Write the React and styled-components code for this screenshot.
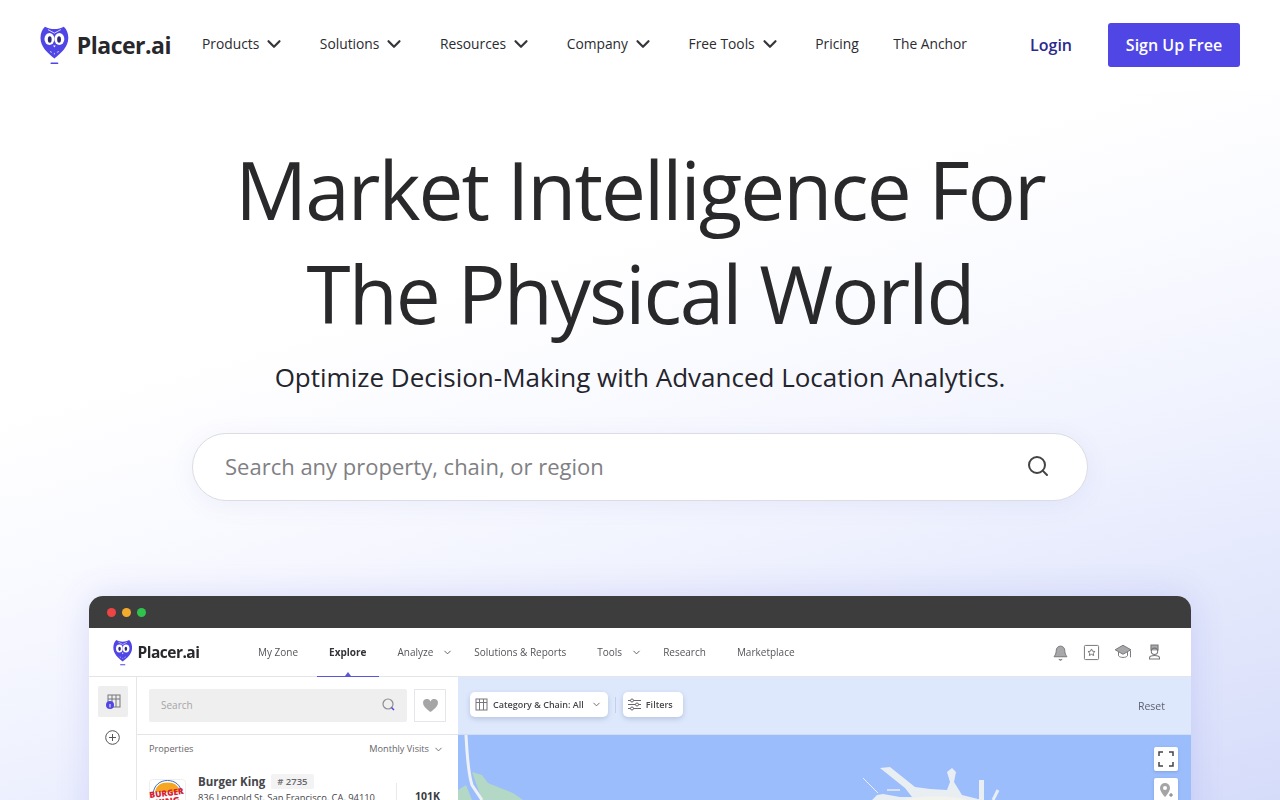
import React from "react";
import styled, { createGlobalStyle } from "styled-components";
import { ChevronDown, Search } from "lucide-react";

const GlobalStyle = createGlobalStyle`
  html, body {
    margin: 0;
    padding: 0;
    height: 800px;
    overflow: hidden;
    background: #fff;
    font-family: "Open Sans", "Liberation Sans", sans-serif;
  }
`;

const Page = styled.div`
  width: 1280px;
  height: 800px;
  overflow: hidden;
  background: linear-gradient(164deg, #ffffff 35%, #f9faff 50%, #f0f2fe 65%, #e8ecfd 74%, #dde2fb 91%, #d5dcfa 100%);
`;

const Header = styled.header`
  height: 90px;
  padding: 0 40px;
  display: flex;
  align-items: center;
  background: #fff;
  box-sizing: border-box;
`;

const Logo = styled.div`
  display: flex;
  align-items: center;
  gap: ${(p) => (p.$small ? "5px" : "8px")};
  font-weight: 700;
  font-size: ${(p) => (p.$small ? "15.5px" : "23px")};
  letter-spacing: -0.5px;
  color: #28282c;
  width: ${(p) => (p.$small ? "auto" : "162px")};
`;

const Nav = styled.nav`
  display: flex;
  align-items: center;
  gap: 34.6px;
  flex: 1;
  margin-bottom: 3px;
`;

const NavItem = styled.a`
  display: flex;
  align-items: center;
  gap: 4px;
  font-size: 13.8px;
  color: #2b2b30;
`;

const Login = styled.a`
  font-size: 16px;
  font-weight: 600;
  color: #2b2a8c;
  margin-right: 36px;
`;

const SignUp = styled.a`
  width: 132px;
  height: 44px;
  display: flex;
  align-items: center;
  justify-content: center;
  background: #4f46e5;
  color: #fff;
  font-size: 16px;
  font-weight: 600;
  border-radius: 3px;
`;

const Hero = styled.section`
  display: flex;
  flex-direction: column;
  align-items: center;
`;

const Title = styled.h1`
  margin: 47px 0 0;
  font-size: 80px;
  line-height: 104px;
  font-weight: 400;
  letter-spacing: -1.95px;
  text-align: center;
  color: #29292b;
`;

const Subtitle = styled.p`
  margin: 12px 0 0;
  font-size: 26px;
  line-height: 40px;
  color: #24242c;
`;

const SearchBox = styled.div`
  margin-top: 36px;
  width: 896px;
  height: 68px;
  box-sizing: border-box;
  padding: 0 37px 3px 32px;
  display: flex;
  align-items: center;
  justify-content: space-between;
  background: #fff;
  border: 1px solid #dcdde3;
  border-radius: 34px;
  font-size: 22px;
  color: #808084;
  box-shadow: 0 4px 24px rgba(90, 100, 190, 0.08);
`;

const Browser = styled.div`
  margin-top: 95px;
  width: 1102px;
  height: 300px;
  flex-shrink: 0;
  border-radius: 14px 14px 0 0;
  overflow: hidden;
  background: #fff;
  box-shadow: 0 0 34px rgba(80, 90, 220, 0.16);
  filter: blur(0.35px);
`;

const TitleBar = styled.div`
  height: 32px;
  background: #3d3d3d;
  display: flex;
  align-items: center;
  gap: 6px;
  padding-left: 18px;
`;

const Dot = styled.span`
  width: 9px;
  height: 9px;
  border-radius: 50%;
  background: ${(p) => p.$color};
`;

const AppBar = styled.div`
  height: 48px;
  display: flex;
  align-items: center;
  padding: 0 28px 0 24px;
  border-bottom: 1px solid #e4e5ea;
`;

const AppNav = styled.div`
  display: flex;
  align-items: center;
  margin-left: 58.5px;
  flex: 1;
  height: 100%;
`;

const AppNavItem = styled.span`
  position: relative;
  height: 100%;
  display: flex;
  align-items: center;
  gap: 9px;
  font-size: 10px;
  font-weight: ${(p) => (p.$active ? 700 : 400)};
  color: ${(p) => (p.$active ? "#333338" : "#55555a")};
  margin-right: ${(p) => p.$gap}px;

  ${(p) =>
    p.$active &&
    `
    &::after {
      content: "";
      position: absolute;
      left: -12px;
      right: -13px;
      bottom: -1px;
      height: 1.5px;
      background: #5a55d8;
    }
    &::before {
      content: "";
      position: absolute;
      left: 50%;
      bottom: 0;
      margin-left: -3px;
      border: 3px solid transparent;
      border-top: 0;
      border-bottom: 4px solid #5a55d8;
    }
  `}
`;

const AppIcons = styled.div`
  display: flex;
  align-items: center;
  gap: 14px;
  color: #8b8b8f;
`;

const Workspace = styled.div`
  display: flex;
  height: 220px;
`;

const Rail = styled.div`
  width: 48px;
  flex-shrink: 0;
  box-sizing: border-box;
  padding-top: 9px;
  display: flex;
  flex-direction: column;
  align-items: center;
  gap: 13px;
  border-right: 1px solid #e6e6ea;
`;

const RailButton = styled.div`
  width: 30px;
  height: 31px;
  display: flex;
  align-items: center;
  justify-content: center;
  background: #eeeeef;
  border-radius: 2px;
`;

const Panel = styled.div`
  width: 321px;
  flex-shrink: 0;
  background: #fff;
`;

const PanelSearchRow = styled.div`
  height: 58px;
  box-sizing: border-box;
  padding: 12px 12px 0 12px;
  display: flex;
  gap: 7px;
  border-bottom: 1px solid #e4e5e8;
`;

const PanelSearch = styled.div`
  flex: 1;
  height: 33px;
  box-sizing: border-box;
  padding: 0 11px 2px 12px;
  display: flex;
  align-items: center;
  justify-content: space-between;
  background: #efefef;
  border-radius: 2px;
  font-size: 10px;
  color: #a5a5a8;
`;

const HeartButton = styled.div`
  width: 32px;
  height: 33px;
  box-sizing: border-box;
  display: flex;
  align-items: center;
  justify-content: center;
  border: 1px solid #e6e6e8;
`;

const PanelHead = styled.div`
  display: flex;
  justify-content: space-between;
  padding: 7px 14px 0 12px;
  font-size: 9.2px;
  color: #66666b;
  line-height: 14px;
`;

const SortLabel = styled.span`
  display: flex;
  align-items: center;
  gap: 4px;
`;

const PropertyRow = styled.div`
  display: flex;
  padding: 18px 0 0 12px;
  gap: 12px;
`;

const BrandLogo = styled.svg`
  margin-top: 5px;
  flex-shrink: 0;
`;

const PropertyInfo = styled.div`
  width: 186px;
  color: #45454a;
`;

const PropertyName = styled.div`
  display: flex;
  align-items: center;
  gap: 6px;
  font-size: 11.5px;
  line-height: 15px;
  font-weight: 700;
`;

const RankTag = styled.span`
  padding: 0 6px;
  background: #f3f3f4;
  border-radius: 2px;
  font-size: 9.5px;
  font-weight: 600;
  color: #66666b;
`;

const Address = styled.div`
  margin-top: 3px;
  font-size: 9.35px;
  line-height: 12px;
  white-space: nowrap;
`;

const VisitCount = styled.div`
  flex: 1;
  margin-top: 9px;
  padding: 6px 0 0 18px;
  border-left: 1px solid #e9e9ec;
  font-size: 10.5px;
  line-height: 14px;
  font-weight: 700;
  color: #3a3a3f;
`;

const MapArea = styled.div`
  flex: 1;
  position: relative;
  background: #9bbdfb;
`;

const FilterBar = styled.div`
  height: 58px;
  box-sizing: border-box;
  padding: 0 26px 2px 12px;
  display: flex;
  align-items: center;
  gap: 7px;
  background: #dde8fc;
  border-bottom: 1px solid #d0ddf4;
`;

const FilterChip = styled.div`
  height: 25px;
  box-sizing: border-box;
  padding: 0 ${(p) => p.$end}px 0 5px;
  display: flex;
  align-items: center;
  gap: 5px;
  background: #fff;
  border-radius: 5px;
  font-size: 9px;
  font-weight: 600;
  color: #46464c;
  box-shadow: 0 2px 5px rgba(70, 90, 140, 0.25);
`;

const ChipChevron = styled(ChevronDown)`
  margin-left: 2px;
`;

const Divider = styled.span`
  width: 1px;
  height: 16px;
  background: #c3cfe6;
`;

const ResetLink = styled.span`
  margin: 2px 0 0 auto;
  font-size: 10.5px;
  color: #5d6270;
`;

const MapButton = styled.div`
  position: absolute;
  right: 13px;
  top: ${(p) => p.$top}px;
  width: 24px;
  height: 24px;
  display: flex;
  align-items: center;
  justify-content: center;
  background: #fff;
  border-radius: 2px;
  box-shadow: 0 1px 3px rgba(60, 80, 130, 0.25);
`;

const MapDrawing = styled.svg`
  position: absolute;
  left: 0;
  top: 58px;
`;

const OwlLogo = ({ size }) => (
  <svg width={size * 0.72} height={size} viewBox="0 0 29 40" aria-hidden="true">
    <path
      d="M5 1.500C8 3 11 4 14.500 4C18 4 21 3 24 1.500C27 4 28.500 8.500 28.500 13C28.500 22 21 28.500 14.500 33.500C8 28.500 .5 22 .5 13C.5 8.500 2 4 5 1.500Z"
      fill="#4f46e5"
    />
    <path d="M8 4.500L14.500 8L21 4.500" fill="none" stroke="#d8d6fb" strokeWidth="1" />
    <ellipse cx="9.500" cy="14" rx="5" ry="6" fill="#fff" />
    <ellipse cx="19.500" cy="14" rx="5" ry="6" fill="#fff" />
    <ellipse cx="9.800" cy="14.500" rx="1.900" ry="3.200" fill="#2d2a70" />
    <ellipse cx="19.200" cy="14.500" rx="1.900" ry="3.200" fill="#2d2a70" />
    <path d="M13.200 20.500L14.500 22.500L15.800 20.500Z" fill="#fff" />
    <path d="M10 26.500L12 27.500M19 26.500L17 27.500M14.500 28V29.500" stroke="#c9c6f8" strokeWidth="1" />
    <rect x="10.500" y="37.500" width="8" height="1.600" rx=".8" fill="#4f46e5" />
  </svg>
);

const navItems = [
  { label: "Products", menu: true },
  { label: "Solutions", menu: true },
  { label: "Resources", menu: true },
  { label: "Company", menu: true },
  { label: "Free Tools", menu: true },
  { label: "Pricing" },
  { label: "The Anchor" },
];

const appNavItems = [
  { label: "My Zone", gap: 31 },
  { label: "Explore", gap: 31, active: true },
  { label: "Analyze", gap: 21, menu: true },
  { label: "Solutions & Reports", gap: 31 },
  { label: "Tools", gap: 21, menu: true },
  { label: "Research", gap: 31 },
  { label: "Marketplace", gap: 0 },
];

const App = () => {
  return (
    <Page>
      <GlobalStyle />
      <Header>
        <Logo>
          <OwlLogo size={40} />
          Placer.ai
        </Logo>
        <Nav>
          {navItems.map((item) => (
            <NavItem key={item.label}>
              {item.label}
              {item.menu && <ChevronDown size={22} strokeWidth={2.4} color="#35353a" />}
            </NavItem>
          ))}
        </Nav>
        <Login>Login</Login>
        <SignUp>Sign Up Free</SignUp>
      </Header>
      <Hero>
        <Title>
          Market Intelligence For
          <br />
          The Physical World
        </Title>
        <Subtitle>Optimize Decision-Making with Advanced Location Analytics.</Subtitle>
        <SearchBox>
          Search any property, chain, or region
          <Search size={24} strokeWidth={2} color="#444" />
        </SearchBox>
        <Browser>
          <TitleBar>
            <Dot $color="#ee4444" />
            <Dot $color="#f4aa2c" />
            <Dot $color="#2fc24d" />
          </TitleBar>
          <AppBar>
            <Logo $small>
              <OwlLogo size={27} />
              Placer.ai
            </Logo>
            <AppNav>
              {appNavItems.map((item) => (
                <AppNavItem key={item.label} $active={item.active} $gap={item.gap}>
                  {item.label}
                  {item.menu && <ChevronDown size={11} strokeWidth={2} />}
                </AppNavItem>
              ))}
            </AppNav>
            <AppIcons>
              <svg width="17" height="17" viewBox="0 0 24 24" fill="#a8a8aa" stroke="#77777a" strokeWidth="1.4">
                <path d="M12 3a6 6 0 0 0-6 6c0 6-3 8-3 9h18c0-1-3-3-3-9a6 6 0 0 0-6-6z" />
                <path d="M10 21a2 2 0 0 0 4 0" />
              </svg>
              <svg width="17" height="17" viewBox="0 0 24 24" fill="none" stroke="#77777a" strokeWidth="1.4">
                <rect x="2" y="2" width="20" height="20" rx="1.500" />
                <path d="M12 7l1.500 3.200 3.500.4-2.600 2.300.7 3.400-3.100-1.700-3.100 1.700.7-3.400L7 10.600l3.500-.4z" />
              </svg>
              <svg width="18" height="18" viewBox="0 0 24 24" fill="#a8a8aa" stroke="#77777a" strokeWidth="1.300">
                <path d="M12 3L1.500 9 12 15 22.500 9z" />
                <path d="M6 12v5c2 3 10 3 12 0v-5" fill="none" />
                <path d="M22 10v9" fill="none" />
              </svg>
              <svg width="17" height="18" viewBox="0 0 24 24" fill="none" stroke="#77777a" strokeWidth="1.500">
                <path d="M7 10V2h10v8" fill="#a8a8aa" />
                <circle cx="12" cy="11" r="4.500" />
                <path d="M5 22v-2c0-2 3-3 7-3s7 1 7 3v2z" />
              </svg>
            </AppIcons>
          </AppBar>
          <Workspace>
            <Rail>
              <RailButton>
                <svg width="16" height="16" viewBox="0 0 16 16">
                  <rect x="3" y="1" width="12" height="12" fill="none" stroke="#77777c" />
                  <path d="M3 5h12M7 1v12M11 1v12" stroke="#77777c" />
                  <circle cx="5" cy="11" r="4" fill="#4f46e5" />
                  <rect x="4.500" y="10" width="1" height="3.400" fill="#fff" />
                </svg>
              </RailButton>
              <svg width="15" height="15" viewBox="0 0 15 15" fill="none" stroke="#55555a">
                <circle cx="7.500" cy="7.500" r="6.800" />
                <path d="M7.500 4v7M4 7.500h7" />
              </svg>
            </Rail>
            <Panel>
              <PanelSearchRow>
                <PanelSearch>
                  Search
                  <svg width="15" height="15" viewBox="0 0 15 15" fill="none">
                    <circle cx="7" cy="7" r="5" stroke="#8e8e92" strokeWidth="1.200" />
                    <path d="M10.500 10.500l2.500 2.500" stroke="#4f46e5" strokeWidth="1.500" />
                  </svg>
                </PanelSearch>
                <HeartButton>
                  <svg width="15" height="13" viewBox="0 0 24 21">
                    <path d="M12 21S0 13.500 0 6.500A6.200 6.200 0 0 1 12 4a6.200 6.200 0 0 1 12 2.500C24 13.500 12 21 12 21z" fill="#a5a5a7" />
                  </svg>
                </HeartButton>
              </PanelSearchRow>
              <PanelHead>
                <span>Properties</span>
                <SortLabel>
                  Monthly Visits
                  <ChevronDown size={11} />
                </SortLabel>
              </PanelHead>
              <PropertyRow>
                <BrandLogo width="37" height="37" viewBox="0 0 37 37">
                  <rect x=".5" y=".5" width="36" height="36" rx="3" fill="#fff" stroke="#eeeef0" />
                  <path d="M4 15C5 6 11 1.500 18.500 1.500S32 6 33 15" fill="none" stroke="#3b6fb5" strokeWidth="1" />
                  <path d="M6 13C7 6.500 12 3.500 18.500 3.500S30 6.500 31 13Z" fill="#f5a623" />
                  <g transform="rotate(-7 18 18)" fontFamily="'Open Sans', sans-serif" fontWeight="800" fill="#d81f34" textAnchor="middle">
                    <text x="18" y="17" fontSize="8.500">BURGER</text>
                    <text x="18" y="26" fontSize="9.500">KING</text>
                  </g>
                </BrandLogo>
                <PropertyInfo>
                  <PropertyName>
                    Burger King
                    <RankTag># 2735</RankTag>
                  </PropertyName>
                  <Address>836 Leopold St, San Francisco, CA, 94110</Address>
                </PropertyInfo>
                <VisitCount>101K</VisitCount>
              </PropertyRow>
            </Panel>
            <MapArea>
              <FilterBar>
                <FilterChip $end={6}>
                  <svg width="13" height="13" viewBox="0 0 13 13" fill="none" stroke="#77777c">
                    <rect x="1" y="1" width="11" height="11" />
                    <path d="M1 4.500h11M4.500 1v11M8.500 1v11" />
                  </svg>
                  Category &amp; Chain: All
                  <ChipChevron size={11} color="#66666b" />
                </FilterChip>
                <Divider />
                <FilterChip $end={10}>
                  <svg width="13" height="13" viewBox="0 0 13 13" fill="none" stroke="#66666b">
                    <path d="M0 2.500h13M0 6.500h13M0 10.500h13" />
                    <circle cx="4" cy="2.500" r="1.500" fill="#fff" />
                    <circle cx="9" cy="6.500" r="1.500" fill="#fff" />
                    <circle cx="4" cy="10.500" r="1.500" fill="#fff" />
                  </svg>
                  Filters
                </FilterChip>
                <ResetLink>Reset</ResetLink>
              </FilterBar>
              <MapDrawing width="733" height="65" viewBox="0 0 733 65">
                <path d="M14 37L24 40L30 48L55 58L65 65H24Z" fill="#b3d8c6" />
                <path d="M0 55L8 50L14 65H0Z" fill="#b3d8c6" />
                <path d="M8 0C9 20 10 38 14 50L24 65" fill="none" stroke="#eef2f5" strokeWidth="3" />
                <path
                  d="M422 33L432 32L457 52L472 54L489 55L492 47L489 37L494 33L498 37L496 47L504 60L520 64L525 65H414L419 60L425 59L442 62L454 62L447 53Z"
                  fill="#e9eef3"
                />
                <path d="M521 45H526V65H521Z" fill="#e9eef3" />
                <path d="M535 65L540 55" stroke="#e9eef3" strokeWidth="3" />
                <path d="M405 43L420 58" stroke="#e9eef3" strokeWidth="1" />
                <path d="M429 55H442" stroke="#e9eef3" strokeWidth="1.500" />
                <path d="M446 65C465 60 490 60 510 65Z" fill="#f2f3ec" />
              </MapDrawing>
              <MapButton $top={70}>
                <svg width="16" height="16" viewBox="0 0 16 16" fill="none" stroke="#44444a" strokeWidth="1.500">
                  <path d="M1 5V1h4M11 1h4v4M1 11v4h4M11 15h4v-4" />
                </svg>
              </MapButton>
              <MapButton $top={101}>
                <svg width="16" height="16" viewBox="0 0 16 16">
                  <path d="M7 1a5 5 0 0 0-5 5c0 4 5 9 5 9s5-5 5-9a5 5 0 0 0-5-5z" fill="#a5a5a7" />
                  <circle cx="7" cy="6" r="2" fill="#fff" />
                  <path d="M11 13h4M13 11v4" stroke="#77777a" />
                </svg>
              </MapButton>
            </MapArea>
          </Workspace>
        </Browser>
      </Hero>
    </Page>
  );
};

export default App;
